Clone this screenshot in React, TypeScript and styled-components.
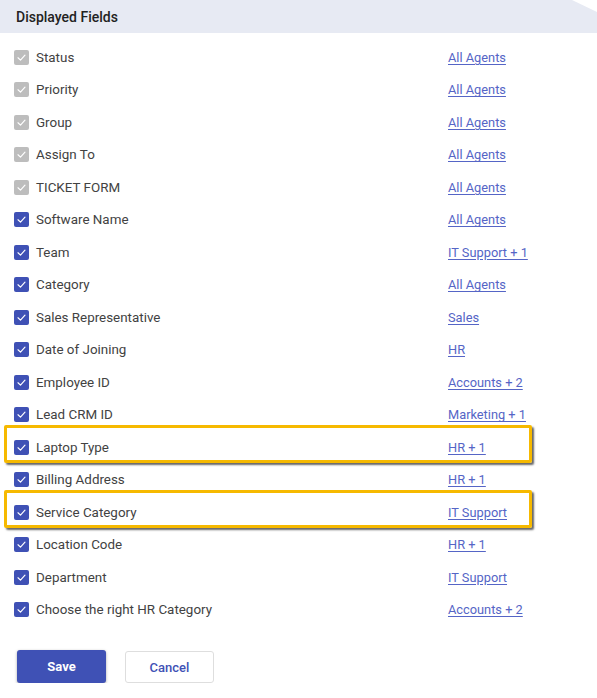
import React from 'react';
import styled, { createGlobalStyle } from 'styled-components';

const GlobalStyle = createGlobalStyle`
	body {
		margin: 0;
		background: #ffffff;
		font-family: Roboto, "Noto Sans", "Liberation Sans", sans-serif;
	}
`;

type Field = {
	label: string;
	access: string;
	locked?: boolean;
	highlighted?: boolean;
};

const fields: Field[] = [
	{ label: 'Status', access: 'All Agents', locked: true },
	{ label: 'Priority', access: 'All Agents', locked: true },
	{ label: 'Group', access: 'All Agents', locked: true },
	{ label: 'Assign To', access: 'All Agents', locked: true },
	{ label: 'TICKET FORM', access: 'All Agents', locked: true },
	{ label: 'Software Name', access: 'All Agents' },
	{ label: 'Team', access: 'IT Support + 1' },
	{ label: 'Category', access: 'All Agents' },
	{ label: 'Sales Representative', access: 'Sales' },
	{ label: 'Date of Joining', access: 'HR' },
	{ label: 'Employee ID', access: 'Accounts + 2' },
	{ label: 'Lead CRM ID', access: 'Marketing + 1' },
	{ label: 'Laptop Type', access: 'HR + 1', highlighted: true },
	{ label: 'Billing Address', access: 'HR + 1' },
	{ label: 'Service Category', access: 'IT Support', highlighted: true },
	{ label: 'Location Code', access: 'HR + 1' },
	{ label: 'Department', access: 'IT Support' },
	{ label: 'Choose the right HR Category', access: 'Accounts + 2' },
];

export default function App() {
	return (
		<>
			<GlobalStyle />
			<Panel>
				<Header>Displayed Fields</Header>
				<FieldList>
					{fields.map((f) => (
						<FieldRow key={f.label} $highlighted={f.highlighted}>
							<Check $locked={f.locked}>
								<svg width="11" height="11" viewBox="0 0 12 12">
									<path
										d="M2.2 6.3 L4.9 8.8 L9.8 3.4"
										fill="none"
										stroke="#fff"
										strokeWidth="1.3"
										strokeLinecap="round"
										strokeLinejoin="round"
									/>
								</svg>
							</Check>
							<Label>{f.label}</Label>
							<AccessLink href="#">{f.access}</AccessLink>
						</FieldRow>
					))}
				</FieldList>
				<Actions>
					<SaveButton type="button">Save</SaveButton>
					<CancelButton type="button">Cancel</CancelButton>
				</Actions>
			</Panel>
		</>
	);
}

const Panel = styled.div`
	width: 597px;
	display: flex;
	flex-direction: column;
`;

const Header = styled.div`
	height: 33px;
	display: flex;
	align-items: center;
	padding-left: 16px;
	background: #e7eaf3;
	color: #222;
	font-size: 14px;
	font-weight: 500;
	clip-path: polygon(0 0, 572px 0, 597px 12px, 597px 100%, 0 100%);
`;

const FieldList = styled.div`
	display: flex;
	flex-direction: column;
	padding: 8px 0 0 14px;
`;

const FieldRow = styled.div<{ $highlighted?: boolean }>`
	position: relative;
	height: 32.5px;
	display: grid;
	grid-template-columns: 22px 412px auto;
	align-items: center;

	${({ $highlighted }) =>
		$highlighted &&
		`
		&::after {
			content: '';
			position: absolute;
			top: -6px;
			bottom: 1px;
			left: -10px;
			width: 522px;
			border: 3px solid #f6b900;
			border-radius: 2px;
			box-shadow: 2px 2px 2px rgba(0, 0, 0, 0.6);
			pointer-events: none;
		}
	`}
`;

const Check = styled.span<{ $locked?: boolean }>`
	width: 15px;
	height: 15px;
	border-radius: 2px;
	display: flex;
	align-items: center;
	justify-content: center;
	background: ${({ $locked }) => ($locked ? '#bdbdbd' : '#3f51b5')};
`;

const Label = styled.span`
	font-size: 13.4px;
	color: #424242;
`;

const AccessLink = styled.a`
	font-size: 12.8px;
	color: #5565c6;
	text-decoration: underline;
	text-underline-offset: 2px;
`;

const Actions = styled.div`
	display: flex;
	gap: 19px;
	padding: 24px 0 0 17px;
`;

const SaveButton = styled.button`
	width: 89px;
	height: 33px;
	border: none;
	border-radius: 3px;
	background: #3f51b5;
	color: #fff;
	font-family: inherit;
	font-size: 13px;
	font-weight: 700;
	box-shadow: 0 1px 3px rgba(0, 0, 0, 0.35);
`;

const CancelButton = styled.button`
	width: 89px;
	height: 32px;
	margin-top: 1px;
	border: 1px solid #dedede;
	border-radius: 3px;
	background: #fff;
	color: #3f51b5;
	font-family: inherit;
	font-size: 13px;
	font-weight: 500;
`;
